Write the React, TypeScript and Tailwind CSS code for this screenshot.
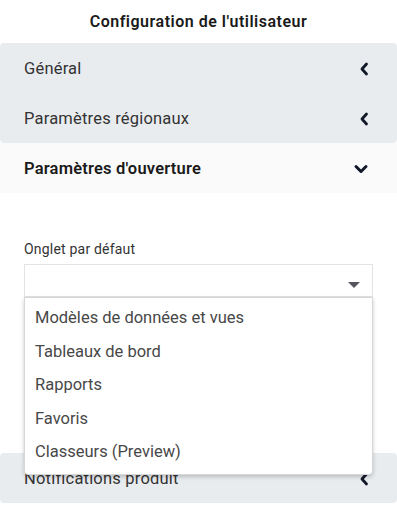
import React from "react"

const ChevronLeft = () => (
  <svg width="10" height="14" viewBox="0 0 10 14" className="text-[#111827]">
    <path d="M7.5 2 L3 7 L7.5 12" fill="none" stroke="currentColor" strokeWidth="2.8" strokeLinecap="round" strokeLinejoin="round" />
  </svg>
)

const ChevronDown = () => (
  <svg width="16" height="12" viewBox="0 0 16 12" className="text-[#111827]">
    <path d="M3 3.5 L8 8.5 L13 3.5" fill="none" stroke="currentColor" strokeWidth="3" strokeLinecap="round" strokeLinejoin="round" />
  </svg>
)

const Row = ({ label, bold = false, open = false, bg }: { label: string; bold?: boolean; open?: boolean; bg: string }) => (
  <div className={`h-[50px] flex items-center justify-between pl-[24px] pr-[28px] pt-[2px] ${bg}`}>
    <span className={bold ? "text-[16.5px] font-semibold text-[#1a1a1a] tracking-[0.2px]" : "text-[16.5px] text-[#333] tracking-[0.2px]"}>{label}</span>
    {open ? <ChevronDown /> : <ChevronLeft />}
  </div>
)

const options = ["Modèles de données et vues", "Tableaux de bord", "Rapports", "Favoris", "Classeurs (Preview)"]

export default function App() {
  return (
    <div className="w-[397px] h-[507px] bg-white overflow-hidden" style={{ fontFamily: "Roboto, 'Noto Sans', sans-serif" }}>
      <div className="h-[43px] flex items-center justify-center">
        <h1 className="text-[16px] font-semibold text-[#1a1a1a] tracking-[0.5px]">Configuration de l'utilisateur</h1>
      </div>
      <div className="bg-[#e9ecef] rounded-sm">
        <Row label="Général" bg="" />
        <Row label="Paramètres régionaux" bg="" />
      </div>
      <Row label="Paramètres d'ouverture" bold open bg="bg-[#fafafa]" />
      <div className="h-[260px] px-[24px] pt-[48px]">
        <label className="block text-[14px] text-[#333] leading-[16px] mb-[7px] tracking-[0.2px]">Onglet par défaut</label>
        <div className="relative">
          <div className="h-[33px] border border-[#e3e3e3] flex items-center justify-end pr-[12px]">
            <svg width="12" height="7" viewBox="0 0 12 7" className="mt-[9px]">
              <path d="M0 0 L12 0 L6 6 Z" fill="#55555f" />
            </svg>
          </div>
          <ul className="absolute z-10 left-0 right-0 top-[33px] bg-white border border-[#d6d6d6] rounded-b-[4px] shadow-[0_2px_4px_rgba(0,0,0,0.2)] py-[4px]">
            {options.map((o) => (
              <li key={o} className="h-[33.5px] flex items-center px-[10px] text-[16.5px] text-[#484848]">{o}</li>
            ))}
          </ul>
        </div>
      </div>
      <div className="bg-[#e9ecef] rounded-sm">
        <Row label="Notifications produit" bg="" />
      </div>
    </div>
  )
}
